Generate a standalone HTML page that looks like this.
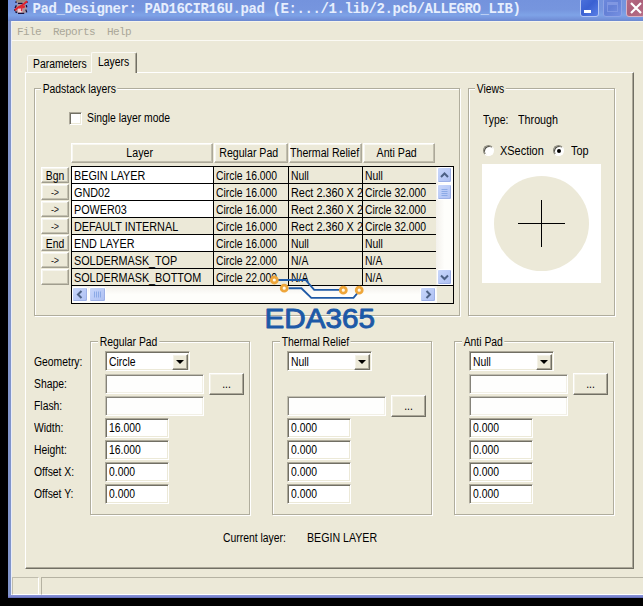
<!DOCTYPE html>
<html lang="en">
<head>
<meta charset="utf-8">
<title>Pad_Designer: PAD16CIR16U.pad</title>
<style>
*{box-sizing:border-box;margin:0;padding:0}
html,body{width:643px;height:606px;overflow:hidden;background:#000}
body{position:relative;font-family:"Liberation Sans",sans-serif;font-size:11px;color:#000;line-height:13px}
.a{position:absolute}
.t{position:absolute;white-space:pre;line-height:13px;height:13px}
#win{left:8px;top:0;width:640px;height:598px;background:#8195ca;border-left:0}
#face{left:11px;top:21px;width:632px;height:574px;background:#ece9d8;border-left:1px solid #e8edfb;border-top:1px solid #e6eaf4;border-bottom:1px solid #fdfdff}
#title{left:8px;top:0;width:635px;height:21px;background:linear-gradient(#7493dd 0,#7695de 45%,#7ea3e7 72%,#7594dc 88%,#6c88cf 100%)}
#ttext{left:32.5px;top:-1.5px;font-family:"Liberation Mono",monospace;font-weight:bold;font-size:14px;letter-spacing:-0.4px;color:#e6eefd;line-height:20px;height:20px;white-space:pre}
.mn{font-family:"Liberation Mono",monospace;font-size:11px;letter-spacing:-0.6px;color:#aaa798;top:25px;white-space:pre;line-height:14px}
/* 3D edges */
.sunk{background:#fff;border:1px solid;border-color:#aca899 #fff #fff #aca899;box-shadow:inset 1px 1px 0 #716f64,inset -1px -1px 0 #ece9d8}
.sunk.dis{background:#fefefd;border-color:#c2bfb0 #fff #fff #c2bfb0;box-shadow:inset 1px 1px 0 #85837a,inset -1px -1px 0 #f2f0e6}
.btn{background:#ece9d8;border:1px solid;border-color:#fff #716f64 #716f64 #fff;box-shadow:inset -1px -1px 0 #aca899,inset 1px 1px 0 #f4f2e8;text-align:center}
.grp{border:1px solid #b0ad9d;box-shadow:1px 1px 0 #fff,inset 1px 1px 0 #fff}
.gl{background:#ece9d8;padding:0 2px;position:absolute;white-space:pre;line-height:13px;height:13px}
.fv{position:absolute;left:2.5px;top:2.5px;white-space:pre;line-height:13px}
.hd{line-height:13px;border-color:#fff #aca899 #aca899 #fff;box-shadow:inset -1px -1px 0 #c2bfae,inset 1px 1px 0 #f8f7f0}
.hl{position:relative;top:3px;left:-2px;white-space:pre}
.bl{position:relative;top:1.5px;white-space:pre;line-height:13px;display:block}
.c{height:16px;background:#ece9d8;overflow:hidden;white-space:pre;line-height:13px}
.c span{position:absolute;left:2px;top:3px}
.sb{background:linear-gradient(135deg,#c9d7fb,#b8c9f6 60%,#aebff0);border:1px solid #fff;border-radius:2px;box-shadow:inset -1px -1px 0 #9db0e6}
.sb svg{position:absolute;left:-1px;top:-1px}
.rad{width:11px;height:11px;border-radius:50%;background:#fff;border:1px solid;border-color:#8a887b #fff #fff #8a887b;box-shadow:inset 1px 1px 0 #55534a}
.rad i{position:absolute;left:3px;top:3px;width:4px;height:4px;border-radius:50%;background:#000}
.cb{border:1px solid;border-radius:3px}
.t,.gl,.fv,.c span{font-size:12.5px;transform:scaleX(.83);transform-origin:0 50%}
.hl,.bl{font-size:12.5px;transform:scaleX(.83);transform-origin:50% 50%}
.hl{display:inline-block;transform:scaleX(.85)}
.c.l span{transform:scaleX(.865)}
.c.w span{transform:scaleX(.87)}
.ar{font-size:11.5px;transform:scaleX(.78);color:#222;top:.5px}
.sd{border-color:#fff #a09d8e #a09d8e #fff;box-shadow:inset -1px -1px 0 #c4c1b0,inset 1px 1px 0 #f6f5ee}
</style>
</head>
<body>
<div class="a" id="win"></div>
<div class="a" id="title"></div>
<div class="a" id="face"></div>
<svg class="a" style="left:8px;top:0" width="22" height="15" viewBox="0 0 22 15">
<path d="M8 0H18.5V2L15 3.5L18.5 6L19 12L16 13.5H10L6.5 11L8 5.5L10 3.5L8 2Z" fill="#a9949a"/>
<path d="M8.3 0H17.5V1.8H8.3Z" fill="#978c80"/>
<path d="M9.5 8H14.5V12.8H10Z" fill="#eeb4c0"/>
<path d="M11 9V12M12.5 9.5V12.5" stroke="#fff" stroke-width="0.8" opacity=".8"/>
<path d="M7.2 2.2H8.8M18.6 2.2H19.8M10 3.4H14.6M8.4 5.4L7 8M6.8 9L6.6 10.8M7.4 11.6L9 12.6M18.3 5.2L18.8 7.4M17.8 9.6L18.8 12.4M10 13.4H16.2" fill="none" stroke="#14103c" stroke-width="1.3"/>
<path d="M19.2 1.2L14.5 5.2L9 8.2L6.8 10.2" fill="none" stroke="#de222c" stroke-width="2"/>
<path d="M9.8 6.8L17.2 5.4L16.6 8L11 8.4Z" fill="#e02830"/>
<path d="M14 7L13.4 11" stroke="#d83040" stroke-width="1.4"/>
</svg>
<div class="a" id="ttext">Pad_Designer: PAD16CIR16U.pad (E:.../1.lib/2.pcb/ALLEGRO_LIB)</div>
<div class="a cb" style="left:580px;top:-2px;width:19px;height:19px;background:linear-gradient(135deg,#4c72dc,#3a60d2 45%,#5a80e6);border-color:#b4c6f5"><div class="a" style="left:3px;top:11px;width:7px;height:3px;background:#fff"></div></div>
<div class="a cb" style="left:603px;top:-2px;width:19px;height:19px;background:linear-gradient(135deg,#6c88dc,#6480d6 45%,#7690e2);border-color:#8ea4e6"><div class="a" style="left:3px;top:3px;width:11px;height:10px;border:1px solid #8097e2;border-top-width:3px"></div></div>
<div class="a cb" style="left:626px;top:-2px;width:19px;height:19px;background:linear-gradient(135deg,#b86a84,#ac607a 45%,#b87088);border-color:#d8b4c4"><svg width="14" height="12" viewBox="0 0 14 12" style="position:absolute;left:3px;top:3px"><path d="M1 1L11 11M11 1L1 11" stroke="#fff" stroke-width="2.2"/></svg></div>
<div class="a mn" style="left:17px">File</div>
<div class="a mn" style="left:53px">Reports</div>
<div class="a mn" style="left:107px">Help</div>
<div class="a" style="left:12px;top:40px;width:631px;height:1px;background:#fbfaf4"></div>
<div class="a" style="left:12px;top:21px;width:631px;height:1px;background:#f6f4ea"></div>

<div class="a" id="panel" style="left:25px;top:72px;width:609px;height:497px;border:1px solid;border-color:#fff #716f64 #716f64 #fff;box-shadow:inset -1px -1px 0 #aca899"></div>
<div class="a" id="tab1" style="left:27px;top:55px;width:64px;height:18px;border:1px solid;border-color:#fbfaf5 transparent transparent #fbfaf5;border-radius:2px 2px 0 0;border-bottom:0"></div>
<div class="t" style="left:33px;top:58px">Parameters</div>
<div class="a" id="tab2" style="left:91px;top:52px;width:46px;height:21px;background:#ece9d8;border:1px solid;border-color:#fbfaf5 #716f64 transparent #fbfaf5;border-bottom:0;border-radius:2px 2px 0 0;box-shadow:inset -1px 0 0 #aca899"></div>
<div class="t" style="left:98px;top:56px">Layers</div>

<div class="a grp" style="left:34px;top:88px;width:426px;height:228px"></div>
<div class="gl" style="left:41px;top:83px">Padstack layers</div>
<div class="a sunk" style="left:69px;top:112px;width:13px;height:13px"></div>
<div class="t" style="left:87px;top:112px">Single layer mode</div>
<div class="a btn hd" style="left:71px;top:143px;width:142px;height:20px"><span class="hl">Layer</span></div>
<div class="a btn hd" style="left:214px;top:143px;width:74px;height:20px"><span class="hl">Regular Pad</span></div>
<div class="a btn hd" style="left:289px;top:143px;width:73px;height:20px;overflow:hidden;text-align:left"><span class="hl" style="transform-origin:0 50%;left:0px">Thermal Relief</span></div>
<div class="a btn hd" style="left:363px;top:143px;width:72px;height:20px"><span class="hl">Anti Pad</span></div>
<div class="a" id="grid" style="left:71px;top:166px;width:383px;height:138px;background:#000"></div>
<div class="a btn sd" style="left:41px;top:167px;width:28px;height:16px"><span class="bl">Bgn</span></div>
<div class="a c l" style="left:72px;top:167px;width:141px;background:#fff"><span>BEGIN LAYER</span></div><div class="a c" style="left:214px;top:167px;width:74px"><span>Circle 16.000</span></div><div class="a c" style="left:289px;top:167px;width:73px"><span>Null</span></div><div class="a c" style="left:363px;top:167px;width:73px"><span>Null</span></div>
<div class="a btn sd" style="left:41px;top:184px;width:28px;height:16px"><span class="bl ar">-&gt;</span></div>
<div class="a c l" style="left:72px;top:184px;width:141px;background:#fff"><span>GND02</span></div><div class="a c" style="left:214px;top:184px;width:74px"><span>Circle 16.000</span></div><div class="a c" style="left:289px;top:184px;width:73px"><span style="transform:scaleX(.87)">Rect 2.360 X 2</span></div><div class="a c" style="left:363px;top:184px;width:73px"><span>Circle 32.000</span></div>
<div class="a btn sd" style="left:41px;top:201px;width:28px;height:16px"><span class="bl ar">-&gt;</span></div>
<div class="a c l" style="left:72px;top:201px;width:141px;background:#fff"><span>POWER03</span></div><div class="a c" style="left:214px;top:201px;width:74px"><span>Circle 16.000</span></div><div class="a c" style="left:289px;top:201px;width:73px"><span style="transform:scaleX(.87)">Rect 2.360 X 2</span></div><div class="a c" style="left:363px;top:201px;width:73px"><span>Circle 32.000</span></div>
<div class="a btn sd" style="left:41px;top:218px;width:28px;height:16px"><span class="bl ar">-&gt;</span></div>
<div class="a c l" style="left:72px;top:218px;width:141px;background:#ece9d8"><span>DEFAULT INTERNAL</span></div><div class="a c" style="left:214px;top:218px;width:74px"><span>Circle 16.000</span></div><div class="a c" style="left:289px;top:218px;width:73px"><span style="transform:scaleX(.87)">Rect 2.360 X 2</span></div><div class="a c" style="left:363px;top:218px;width:73px"><span>Circle 32.000</span></div>
<div class="a btn sd" style="left:41px;top:235px;width:28px;height:16px"><span class="bl">End</span></div>
<div class="a c l" style="left:72px;top:235px;width:141px;background:#fff"><span>END LAYER</span></div><div class="a c" style="left:214px;top:235px;width:74px"><span>Circle 16.000</span></div><div class="a c" style="left:289px;top:235px;width:73px"><span>Null</span></div><div class="a c" style="left:363px;top:235px;width:73px"><span>Null</span></div>
<div class="a btn sd" style="left:41px;top:252px;width:28px;height:16px"><span class="bl ar">-&gt;</span></div>
<div class="a c l" style="left:72px;top:252px;width:141px;background:#ece9d8"><span>SOLDERMASK_TOP</span></div><div class="a c" style="left:214px;top:252px;width:74px"><span>Circle 22.000</span></div><div class="a c" style="left:289px;top:252px;width:73px"><span>N/A</span></div><div class="a c" style="left:363px;top:252px;width:73px"><span>N/A</span></div>
<div class="a btn sd" style="left:41px;top:269px;width:28px;height:16px"><span class="bl"></span></div>
<div class="a c l" style="left:72px;top:269px;width:141px;background:#ece9d8"><span>SOLDERMASK_BOTTOM</span></div><div class="a c" style="left:214px;top:269px;width:74px"><span>Circle 22.000</span></div><div class="a c" style="left:289px;top:269px;width:73px"><span>N/A</span></div><div class="a c" style="left:363px;top:269px;width:73px"><span>N/A</span></div>
<div class="a" style="left:436px;top:167px;width:17px;height:118px;background:linear-gradient(90deg,#f3f1ec,#fefefb 50%,#fefefb)"></div>
<div class="a sb" style="left:437px;top:167px;width:15px;height:16px"><svg width="15" height="16" viewBox="0 0 15 16"><path d="M4 10 L7.5 6.5 L11 10" fill="none" stroke="#4d6185" stroke-width="2"/></svg></div>
<div class="a sb" style="left:437px;top:184px;width:15px;height:16px"><svg width="15" height="16" viewBox="0 0 15 16"><path d="M4.5 5.5h6M4.5 7.5h6M4.5 9.5h6M4.5 11.5h6" stroke="#8caae6" stroke-width="1"/></svg></div>
<div class="a sb" style="left:437px;top:269px;width:15px;height:16px"><svg width="15" height="16" viewBox="0 0 15 16"><path d="M4 6.5 L7.5 10 L11 6.5" fill="none" stroke="#4d6185" stroke-width="2"/></svg></div>
<div class="a" style="left:72px;top:286px;width:381px;height:17px;background:#ece9d8"></div>
<div class="a" style="left:72px;top:286px;width:365px;height:17px;background:linear-gradient(#f3f1ec,#fefefb 50%,#fefefb)"></div>
<div class="a sb" style="left:72px;top:287px;width:16px;height:15px"><svg width="16" height="15" viewBox="0 0 16 15"><path d="M9.5 4 L6 7.5 L9.5 11" fill="none" stroke="#4d6185" stroke-width="2"/></svg></div>
<div class="a sb" style="left:89px;top:287px;width:17px;height:15px"><svg width="17" height="15" viewBox="0 0 17 15"><path d="M5.5 4.5v6M7.5 4.5v6M9.5 4.5v6M11.5 4.5v6" stroke="#8caae6" stroke-width="1"/></svg></div>
<div class="a sb" style="left:420px;top:287px;width:16px;height:15px"><svg width="16" height="15" viewBox="0 0 16 15"><path d="M6.5 4 L10 7.5 L6.5 11" fill="none" stroke="#4d6185" stroke-width="2"/></svg></div>

<div class="a grp" style="left:468px;top:88px;width:147px;height:228px"></div>
<div class="gl" style="left:475px;top:83px">Views</div>
<div class="t" style="left:483px;top:114px">Type:</div>
<div class="t" style="left:518px;top:114px;transform:scaleX(.86)">Through</div>
<div class="a rad" style="left:483px;top:145px"></div>
<div class="t" style="left:499.5px;top:145px;transform:scaleX(.875)">XSection</div>
<div class="a rad" style="left:553px;top:145px"><i></i></div>
<div class="t" style="left:571px;top:145px;transform:scaleX(.87)">Top</div>
<div class="a" style="left:482px;top:164px;width:119px;height:119px;background:#fff">
<svg width="119" height="119" viewBox="0 0 119 119" style="position:absolute;left:0;top:0"><circle cx="59.5" cy="59.5" r="47.5" fill="#ece9d8"/><path d="M36 59.5H83M59.5 36V83" stroke="#000" stroke-width="1" shape-rendering="crispEdges"/></svg></div>

<div class="t" style="left:34px;top:356px">Geometry:</div>
<div class="t" style="left:34px;top:378px">Shape:</div>
<div class="t" style="left:34px;top:400px">Flash:</div>
<div class="t" style="left:34px;top:422px">Width:</div>
<div class="t" style="left:34px;top:444px">Height:</div>
<div class="t" style="left:34px;top:466px">Offset X:</div>
<div class="t" style="left:34px;top:488px">Offset Y:</div>
<div class="a grp" style="left:90px;top:341px;width:160px;height:174px"></div>
<div class="gl" style="left:98px;top:336px">Regular Pad</div>
<div class="a sunk" style="left:105px;top:351px;width:85px;height:20px"><span class="fv" style="top:4px;left:2.5px">Circle</span><div class="a btn" style="right:1px;top:2px;width:16px;height:16px"><svg width="8" height="4" viewBox="0 0 8 4" style="position:absolute;left:3px;top:5px"><path d="M0 0h8L4 4z" fill="#000"/></svg></div></div>
<div class="a sunk dis" style="left:105px;top:374px;width:99px;height:20px"></div>
<div class="a btn" style="left:209px;top:373px;width:35px;height:22px"><span class="bl" style="top:4px">...</span></div>
<div class="a sunk dis" style="left:105px;top:396px;width:99px;height:20px"></div>
<div class="a sunk" style="left:105px;top:418px;width:64px;height:20px"><span class="fv">16.000</span></div>
<div class="a sunk" style="left:105px;top:440px;width:64px;height:20px"><span class="fv">16.000</span></div>
<div class="a sunk" style="left:105px;top:462px;width:64px;height:20px"><span class="fv">0.000</span></div>
<div class="a sunk" style="left:105px;top:484px;width:64px;height:20px"><span class="fv">0.000</span></div>
<div class="a grp" style="left:272px;top:341px;width:160px;height:174px"></div>
<div class="gl" style="left:280px;top:336px">Thermal Relief</div>
<div class="a sunk" style="left:287px;top:351px;width:85px;height:20px"><span class="fv" style="top:4px;left:2.5px">Null</span><div class="a btn" style="right:1px;top:2px;width:16px;height:16px"><svg width="8" height="4" viewBox="0 0 8 4" style="position:absolute;left:3px;top:5px"><path d="M0 0h8L4 4z" fill="#000"/></svg></div></div>
<div class="a sunk dis" style="left:287px;top:396px;width:99px;height:20px"></div>
<div class="a btn" style="left:391px;top:395px;width:35px;height:22px"><span class="bl" style="top:4px">...</span></div>
<div class="a sunk" style="left:287px;top:418px;width:64px;height:20px"><span class="fv">0.000</span></div>
<div class="a sunk" style="left:287px;top:440px;width:64px;height:20px"><span class="fv">0.000</span></div>
<div class="a sunk" style="left:287px;top:462px;width:64px;height:20px"><span class="fv">0.000</span></div>
<div class="a sunk" style="left:287px;top:484px;width:64px;height:20px"><span class="fv">0.000</span></div>
<div class="a grp" style="left:454px;top:341px;width:160px;height:174px"></div>
<div class="gl" style="left:462px;top:336px">Anti Pad</div>
<div class="a sunk" style="left:469px;top:351px;width:85px;height:20px"><span class="fv" style="top:4px;left:2.5px">Null</span><div class="a btn" style="right:1px;top:2px;width:16px;height:16px"><svg width="8" height="4" viewBox="0 0 8 4" style="position:absolute;left:3px;top:5px"><path d="M0 0h8L4 4z" fill="#000"/></svg></div></div>
<div class="a sunk dis" style="left:469px;top:374px;width:99px;height:20px"></div>
<div class="a btn" style="left:573px;top:373px;width:35px;height:22px"><span class="bl" style="top:4px">...</span></div>
<div class="a sunk dis" style="left:469px;top:396px;width:99px;height:20px"></div>
<div class="a sunk" style="left:469px;top:418px;width:64px;height:20px"><span class="fv">0.000</span></div>
<div class="a sunk" style="left:469px;top:440px;width:64px;height:20px"><span class="fv">0.000</span></div>
<div class="a sunk" style="left:469px;top:462px;width:64px;height:20px"><span class="fv">0.000</span></div>
<div class="a sunk" style="left:469px;top:484px;width:64px;height:20px"><span class="fv">0.000</span></div>
<div class="t" style="left:223px;top:532px">Current layer:</div>
<div class="t" style="left:307px;top:532px;transform:scaleX(.85)">BEGIN LAYER</div>

<div class="a" style="left:12px;top:577px;width:27px;height:18px;border:1px solid;border-color:#c0bdad #fff #fff #c0bdad"></div>
<div class="a" style="left:41px;top:577px;width:610px;height:18px;border:1px solid;border-color:#b5b2a2 #fff #fff #b5b2a2"></div>
<div class="a" style="left:8px;top:595px;width:635px;height:3px;background:linear-gradient(#8a94d8 0,#7c86cf 50%,#5f68b0 100%)"></div>

<svg class="a" style="left:255px;top:268px" width="130" height="70" viewBox="0 0 130 70">
<path d="M23 12H50.6L59.2 21.9H84" fill="none" stroke="#1f5aa6" stroke-width="1.9"/>
<path d="M33.5 20.2H46.4L56.3 29.9H98.5L102.5 25" fill="none" stroke="#1f5aa6" stroke-width="1.9"/>
<g fill="#fff8e8" stroke="#eea63a" stroke-width="2.8"><circle cx="19.3" cy="12" r="3"/><circle cx="29.2" cy="20.2" r="3"/><circle cx="88.3" cy="22.2" r="3"/><circle cx="104.2" cy="22.2" r="3"/></g>
<text x="9.5" y="60.3" font-family="Liberation Sans, sans-serif" font-size="26.8" fill="#1c59a7" stroke="#1c59a7" stroke-width="0.9" stroke-linejoin="round" textLength="110.5" lengthAdjust="spacingAndGlyphs">EDA365</text>
</svg>

</body>
</html>
